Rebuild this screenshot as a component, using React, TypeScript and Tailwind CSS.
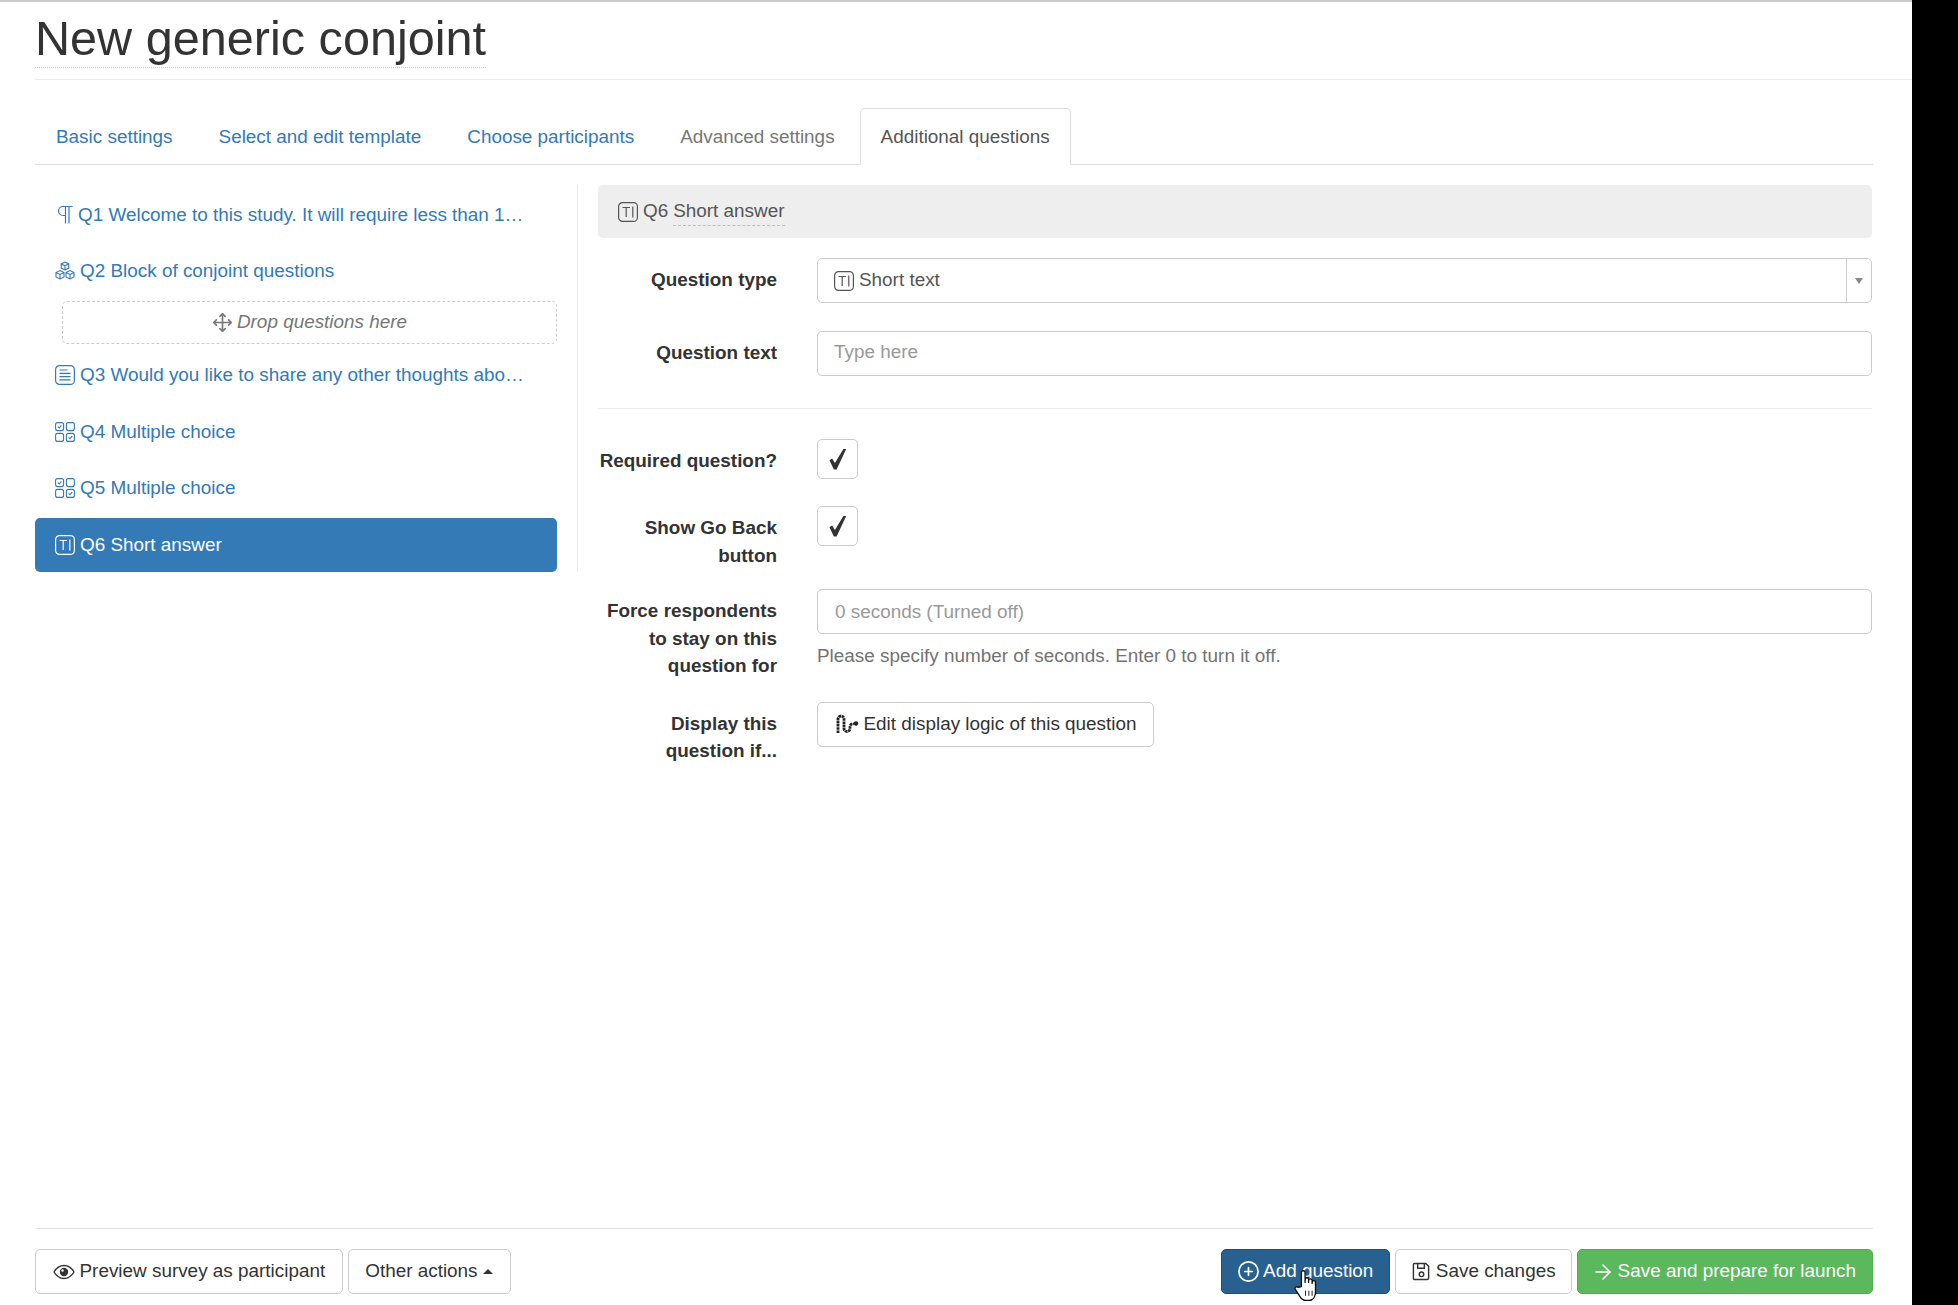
import { ArrowRight, CirclePlus, Move } from "lucide-react";

const font = { fontFamily: '"Liberation Sans", Arial, sans-serif' };

function ShortTextIcon({ className = "" }: { className?: string }) {
  return (
    <svg viewBox="0 0 20 20" className={"h-5 w-5 shrink-0 " + className} fill="none" stroke="currentColor" strokeWidth="1.2">
      <rect x="0.6" y="0.6" width="18.8" height="18.8" rx="4" />
      <path d="M4.5 5.5h7.5M8.2 5.5v9.5M14.8 4.5v11" />
    </svg>
  );
}

function ParagraphIcon() {
  return (
    <svg viewBox="0 0 16 20" className="ml-[2px] h-5 w-4 shrink-0" fill="none" stroke="currentColor" strokeWidth="1.2">
      <path d="M15.5 1.5H6a4.5 4.5 0 0 0 0 9h2.5M8.5 1.5v17M12 1.5v17" />
    </svg>
  );
}

function BlockIcon() {
  return (
    <svg viewBox="0 0 20 20" className="h-5 w-5 shrink-0" fill="none" stroke="currentColor" strokeWidth="1.1">
      <path d="M10 1l3.8 1.9v4.2L10 9 6.2 7.1V2.900zM6.200 2.900L10 4.800l3.800-1.900M10 4.800V9" />
      <path d="M5 9.500l4 2v4.500l-4 2-4-2v-4.500zM1 11.500l4 2 4-2M5 13.500V18" />
      <path d="M15 9.500l4 2v4.500l-4 2-4-2v-4.500zM11 11.500l4 2 4-2M15 13.500V18" />
    </svg>
  );
}

function TextAreaIcon() {
  return (
    <svg viewBox="0 0 20 20" className="h-5 w-5 shrink-0" fill="none" stroke="currentColor" strokeWidth="1.2">
      <rect x="0.6" y="0.6" width="18.8" height="18.8" rx="4" />
      <path d="M4.500 5h8M4.500 8.300h11M4.500 11.600h11M4.500 14.900h11" />
    </svg>
  );
}

function MultipleChoiceIcon() {
  return (
    <svg viewBox="0 0 20 20" className="h-5 w-5 shrink-0" fill="none" stroke="currentColor" strokeWidth="1.1">
      <rect x="0.6" y="0.6" width="8" height="8" rx="2" />
      <rect x="11.400" y="0.6" width="8" height="8" rx="2" />
      <rect x="0.6" y="11.400" width="8" height="8" rx="2" />
      <rect x="11.400" y="11.400" width="8" height="8" rx="2" />
      <path d="M2.800 4.600l1.400 1.400 2.200-2.600M13.600 15.400l1.400 1.400 2.200-2.600" />
    </svg>
  );
}

function LogicIcon() {
  return (
    <svg viewBox="0 0 24 20" className="h-5 w-6 shrink-0" fill="none" stroke="#222" strokeWidth="2.8">
      <path d="M3 19V5a3 3 0 0 1 6 0v9.500a3 3 0 0 0 6 0V13a3 3 0 0 1 4-3" strokeDasharray="2.6 0.6" />
      <circle cx="21" cy="9.500" r="2.200" fill="#222" stroke="none" />
    </svg>
  );
}

function EyeIcon() {
  return (
    <svg viewBox="0 0 22 16" className="h-[16px] w-[22px] shrink-0" fill="none" stroke="#333" strokeWidth="1.4">
      <path d="M1 8c2.500-4.300 5.800-6.500 10-6.500S18.500 3.700 21 8c-2.500 4.300-5.800 6.500-10 6.500S3.500 12.300 1 8z" />
      <circle cx="11" cy="8" r="4.200" fill="#333" stroke="none" />
      <circle cx="9.500" cy="6.500" r="1.200" fill="#fff" stroke="none" />
    </svg>
  );
}

function SaveIcon() {
  return (
    <svg viewBox="0 0 20 20" className="h-[19px] w-[19px] shrink-0" fill="none" stroke="#333" strokeWidth="1.5">
      <path d="M2.500 1.500h12l3 3v12.500a1.500 1.500 0 0 1-1.500 1.500H2.500a1 1 0 0 1-1-1V2.500a1 1 0 0 1 1-1z" />
      <path d="M6 1.500v5h7v-5" />
      <circle cx="10" cy="13" r="2.400" />
    </svg>
  );
}

function CheckMark() {
  return (
    <svg viewBox="0 0 20 24" className="h-6 w-5" fill="#333">
      <path d="M1.500 13.200l2.600-1.600 2.800 4.400L15.400 2h2.800L8.600 22.500H5.800z" />
    </svg>
  );
}

function HandCursor() {
  return (
    <svg viewBox="0 0 24 32" className="absolute left-[72px] top-[20px] h-[33px] w-[25px]" fill="#fff" stroke="#111" strokeWidth="1.3" strokeLinejoin="round">
      <path d="M8 17V3.500a1.800 1.800 0 0 1 3.600 0V13l.1-3.200a1.700 1.700 0 0 1 3.300 0V13l.1-2.200a1.700 1.700 0 0 1 3.300 0V14l.1-1.200a1.600 1.600 0 0 1 3.200 0V22c0 5-2.500 8.500-6.500 8.500h-2.700c-3 0-4.600-1.500-6-4L2 19.600c-.9-1.800 1.500-3.300 3-1.700z" />
      <path d="M12 21v5M15.200 21v5M18.400 21v5" strokeWidth="0.9" />
    </svg>
  );
}

const tabs = ["Basic settings", "Select and edit template", "Choose participants"];

function FormRow({ label, children, className = "" }: { label: React.ReactNode; children: React.ReactNode; className?: string }) {
  return (
    <div className={"flex items-start " + className}>
      <label className="w-[179px] shrink-0 pt-[8px] text-right font-bold leading-[27.5px] text-[#333]">{label}</label>
      <div className="ml-10 min-w-0 flex-1">{children}</div>
    </div>
  );
}

function ListItem({ icon, children, active }: { icon: React.ReactNode; children: React.ReactNode; active?: boolean }) {
  return (
    <div
      className={
        "flex h-[54px] items-center gap-[5px] rounded-[5px] pl-5 " +
        (active ? "bg-[#337ab7] text-white" : "text-[#337ab7]")
      }
    >
      {icon}
      <span className="whitespace-nowrap pt-px">{children}</span>
    </div>
  );
}

function Button({ children, className = "" }: { children: React.ReactNode; className?: string }) {
  return (
    <button className={"flex h-[45px] items-center whitespace-nowrap rounded-[5px] border text-[18.9px] " + className}>
      {children}
    </button>
  );
}

export default function App() {
  return (
    <div style={font} className="flex h-[1305px] w-[1958px] overflow-hidden bg-white text-[18.9px] text-[#333]">
      <div className="flex w-[1912px] flex-col border-t-2 border-[#ccc] pl-[35px]">
        <div className="h-[78px] border-b border-[#eee]">
          <h1 className="mt-[8px] inline-block border-b border-dotted border-[#ccc] text-[48.6px] leading-[57px] text-[#333]">
            New generic conjoint
          </h1>
        </div>

        <div className="mr-[39px] flex flex-1 flex-col">
          <div className="mt-[28px] flex h-[57px] gap-[4px] border-b border-[#ddd]">
            {tabs.map((t) => (
              <a key={t} className="px-[21px] pt-[15px] text-[#337ab7]">{t}</a>
            ))}
            <a className="px-[21px] pt-[15px] text-[#777]">Advanced settings</a>
            <a className="-mb-px rounded-t-[5px] border border-[#ddd] border-b-white bg-white px-[20px] pt-[14px] text-[#555]">
              Additional questions
            </a>
          </div>

          <div className="mt-[20px] flex items-start">
            <div className="w-[543px] shrink-0 border-r border-[#eee] pr-5">
              <div className="flex flex-col gap-[2.5px] pt-[2.5px]">
                <ListItem icon={<ParagraphIcon />}>Q1 Welcome to this study. It will require less than 1…</ListItem>
                <ListItem icon={<BlockIcon />}>Q2 Block of conjoint questions</ListItem>
                <div className="mb-[2px] ml-[27px] flex h-[43px] items-center justify-center gap-[4px] rounded-[5px] border border-dashed border-[#ccc] italic text-[#777]">
                  <Move className="h-[21px] w-[21px]" strokeWidth={1.9} />
                  Drop questions here
                </div>
                <ListItem icon={<TextAreaIcon />}>Q3 Would you like to share any other thoughts abo…</ListItem>
                <ListItem icon={<MultipleChoiceIcon />}>Q4 Multiple choice</ListItem>
                <ListItem icon={<MultipleChoiceIcon />}>Q5 Multiple choice</ListItem>
                <ListItem icon={<ShortTextIcon />} active>Q6 Short answer</ListItem>
              </div>
            </div>

            <div className="ml-5 min-w-0 flex-1 pr-px">
              <div className="flex h-[53px] items-center gap-[5px] rounded-[5px] bg-[#eee] pl-5 text-[#555]">
                <ShortTextIcon />
                <span>Q6</span>
                <span className="border-b border-dashed border-[#bbb]">Short answer</span>
              </div>

              <FormRow label="Question type" className="mt-[20px]">
                <div className="flex h-[45px] items-center rounded-[5px] border border-[#ccc] pl-4 text-[#555]">
                  <ShortTextIcon />
                  <span className="ml-[5px] flex-1">Short text</span>
                  <span className="flex h-full w-[25px] items-center justify-center border-l border-[#ccc]">
                    <span className="h-0 w-0 border-x-[4px] border-t-[6px] border-x-transparent border-t-[#888]" />
                  </span>
                </div>
              </FormRow>

              <FormRow label="Question text" className="mt-[28px]">
                <input placeholder="Type here" className="h-[45px] w-full rounded-[5px] border border-[#ccc] px-4 pb-[3px] text-[18.9px] placeholder:text-[#999]" />
              </FormRow>

              <hr className="mt-[32px] border-[#eee]" />

              <FormRow label="Required question?" className="mt-[30px]">
                <div className="flex h-[40px] w-[41px] items-center justify-center rounded-[5px] border border-[#ccc]">
                  <CheckMark />
                </div>
              </FormRow>

              <FormRow label={<>Show Go Back<br />button</>} className="mt-[27px]">
                <div className="flex h-[40px] w-[41px] items-center justify-center rounded-[5px] border border-[#ccc]">
                  <CheckMark />
                </div>
              </FormRow>

              <FormRow label={<>Force respondents<br />to stay on this<br />question for</>} className="mt-[20px]">
                <input placeholder="0 seconds (Turned off)" className="h-[45px] w-full rounded-[5px] border border-[#ccc] px-[17px] text-[18.9px] placeholder:text-[#999]" />
                <p className="mt-[10px] leading-[24px] text-[#737373]">Please specify number of seconds. Enter 0 to turn it off.</p>
              </FormRow>

              <FormRow label={<>Display this<br />question if...</>} className="mt-[22px]">
                <Button className="gap-[5px] border-[#ccc] bg-white px-[16.5px] text-[#333]">
                  <LogicIcon />
                  Edit display logic of this question
                </Button>
              </FormRow>
            </div>
          </div>

          <div className="mt-auto flex h-[77px] items-start justify-between border-t border-[#e5e5e5] pt-5">
            <div className="flex gap-[5px]">
              <Button className="gap-[5px] border-[#ccc] bg-white px-[16.5px] text-[#333]">
                <EyeIcon />
                Preview survey as participant
              </Button>
              <Button className="gap-[5px] border-[#ccc] bg-white pl-[16.5px] pr-[17px] text-[#333]">
                Other actions
                <span className="h-0 w-0 border-x-[5.5px] border-b-[5.5px] border-x-transparent border-b-[#333]" />
              </Button>
            </div>
            <div className="flex gap-[5px]">
              <div className="relative">
                <Button className="gap-[3px] border-[#204d74] bg-[#286090] pl-[15px] pr-[16px] text-white">
                  <CirclePlus className="h-[23px] w-[23px]" strokeWidth={1.8} />
                  Add question
                </Button>
                <HandCursor />
              </div>
              <Button className="gap-[5px] border-[#ccc] bg-white px-[15.5px] text-[#333]">
                <SaveIcon />
                Save changes
              </Button>
              <Button className="gap-[3px] border-[#4cae4c] bg-[#5cb85c] pl-[12.5px] pr-[16px] text-white">
                <ArrowRight className="h-[24px] w-[24px]" strokeWidth={1.6} />
                Save and prepare for launch
              </Button>
            </div>
          </div>
        </div>
      </div>
      <div className="w-[46px] bg-black" />
    </div>
  );
}
